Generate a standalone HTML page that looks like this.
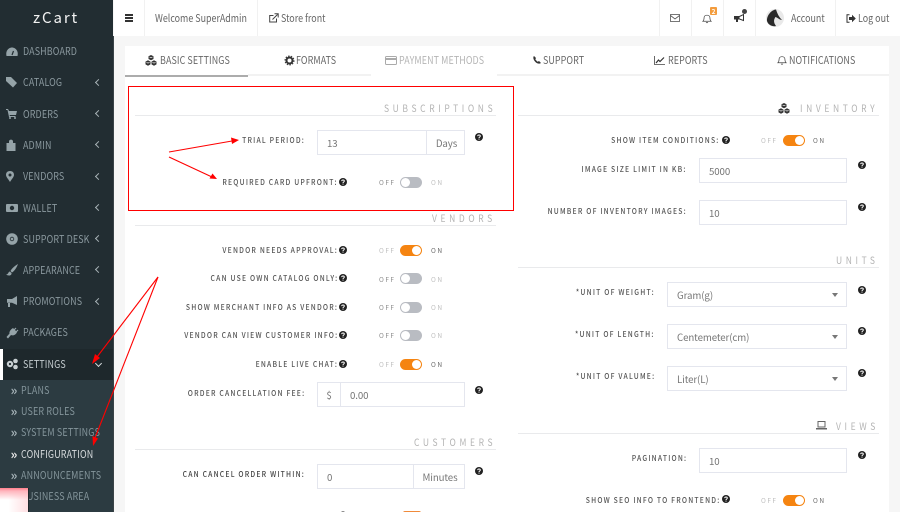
<!DOCTYPE html>
<html><head><meta charset="utf-8"><title>zCart</title>
<style>
html,body{margin:0;padding:0;width:900px;height:512px;overflow:hidden;background:#f6f6f6}
body{font-family:"Noto Sans CJK SC","Liberation Sans",sans-serif;position:relative}
.a,.t,.l,.h,.i,.off,.on,.sw,.lab{position:absolute}
.t{white-space:nowrap;line-height:14px;transform:scaleX(.85);transform-origin:0 50%}
.s{left:23px;font-size:10.5px;color:#8b999f;letter-spacing:.15px}
.c{left:95.500px;width:4px;height:4px;border-left:1.5px solid #a9b4b8;border-bottom:1.5px solid #a9b4b8;transform:rotate(45deg);position:absolute}
.sub{left:21px;font-size:10.5px;color:#84959b;letter-spacing:.2px}
.dbl{position:absolute;left:10.500px;color:#a3b0b5;font-size:13px;line-height:14px;font-weight:700}
.top{font-size:10.5px;color:#666}
.tab{font-size:10.5px;color:#666;letter-spacing:.1px}
.sec{font-size:10px;letter-spacing:4.25px;color:#b4b4b4}
.lab{white-space:nowrap;line-height:14px;font-size:8px;letter-spacing:1.42px;font-weight:500;color:#555;text-align:right;transform:scaleX(.85);transform-origin:100% 50%}
.line{position:absolute;height:1px;background:#e9eaec}
.box{position:absolute;box-sizing:border-box;border:1px solid #e4e6ee;background:#fff;font-size:9.7px;letter-spacing:-.1px;color:#777;line-height:24px;padding-left:9px;height:25px}
.add{position:absolute;top:0;bottom:0;border-left:1px solid #e4e6ee;text-align:center;color:#777}
.sw{width:22px;height:11px;border-radius:6px;background:#b9bcc2}
.sw:after{content:"";position:absolute;left:1px;top:1px;width:9px;height:9px;border-radius:50%;background:#fff}
.sw.y{background:#f58411}.sw.y:after{left:12px}
.off,.on{font-size:6.5px;letter-spacing:1.5px;line-height:10px;color:#bdbdbd;white-space:nowrap}
.dk{color:#666}
.caret{position:absolute;right:8px;top:10px;border-left:3px solid transparent;border-right:3px solid transparent;border-top:4px solid #777}
svg{position:absolute;overflow:visible}
</style></head><body>
<svg width="0" height="0" style="position:absolute"><defs>
<symbol id="q" viewBox="0 0 8 8"><circle cx="4" cy="4" r="4" fill="#222"/><path d="M2.700 3.100C2.800 1.700 5.300 1.700 5.300 3.100 5.300 4 4 4 4 5" fill="none" stroke="#fff" stroke-width="1"/><rect x="3.500" y="5.600" width="1" height="1" fill="#fff"/></symbol>
<symbol id="cubes" viewBox="0 0 12 11"><path d="M6 0 8.500 1.300V4L6 5.200 3.500 4V1.300ZM3 5.300 5.500 6.600V9.400L3 10.700 .5 9.400V6.600ZM9 5.300 11.500 6.600V9.400L9 10.700 6.500 9.400V6.600Z" fill="#333"/><path d="M4.500 2 6 2.800 7.500 2M1.500 7.300 3 8.100 4.500 7.300M7.500 7.300 9 8.100 10.500 7.300" fill="none" stroke="#fff" stroke-width=".6"/></symbol>
<symbol id="bell" viewBox="0 0 11 11"><path d="M1 8.500C2.400 7.400 2.200 6 2.300 4.400 2.400 1 8.600 1 8.700 4.400 8.800 6 8.600 7.400 10 8.500ZM4.500 9.500C5 10.400 6 10.400 6.500 9.500" fill="none" stroke="#444" stroke-width=".8"/></symbol>
</defs></svg>

<!-- sidebar -->
<div class="a" style="left:0;top:0;width:113px;height:512px;background:#222d32"></div>
<div class="a" style="left:113px;top:36px;width:1px;height:476px;background:#3a4347"></div>
<div class="t" style="left:33px;top:9px;font-size:15px;line-height:18px;color:#f2f2f2;letter-spacing:1.9px;transform:none">zCart</div>

<svg style="left:6px;top:47px" width="12" height="10"><path d="M.5 9C-.8 3.500 3 .5 6 .5S12.800 3.500 11.500 9Z" fill="#95a3a8"/><path d="M6 8 7.500 4" stroke="#222d32" stroke-width="1.200"/></svg>
<div class="t s" style="top:45px">DASHBOARD</div>
<svg style="left:6px;top:77px" width="12" height="11"><path d="M0 0H5L11 6 7 10.500 0 4Z" fill="#95a3a8"/></svg>
<div class="t s" style="top:76px">CATALOG</div><div class="c" style="top:80px"></div>
<svg style="left:6px;top:109px" width="11" height="10"><path d="M0 0H2L3 2H11L10 6H3.500L4 7H9.500V8H3L1.500 1H0Z" fill="#95a3a8"/><circle cx="4" cy="9" r="1" fill="#95a3a8"/><circle cx="9" cy="9" r="1" fill="#95a3a8"/></svg>
<div class="t s" style="top:108px">ORDERS</div><div class="c" style="top:111px"></div>
<svg style="left:6px;top:139px" width="10" height="12"><path d="M3 4V2.500C3 0 7 0 7 2.500V4H9.500V12H.5V4Z" fill="#95a3a8"/></svg>
<div class="t s" style="top:139px">ADMIN</div><div class="c" style="top:142px"></div>
<svg style="left:6px;top:171px" width="8" height="11"><path d="M4 0C7 0 8 2 8 4 8 6 5 9 4 11 3 9 0 6 0 4 0 2 1 0 4 0Z" fill="#95a3a8"/><circle cx="4" cy="4" r="1.500" fill="#222d32"/></svg>
<div class="t s" style="top:170px">VENDORS</div><div class="c" style="top:174px"></div>
<svg style="left:6px;top:204px" width="12" height="8"><rect width="12" height="8" rx="1" fill="#95a3a8"/><circle cx="6" cy="4" r="2.200" fill="#222d32"/></svg>
<div class="t s" style="top:202px">WALLET</div><div class="c" style="top:205px"></div>
<svg style="left:6px;top:233px" width="12" height="12"><circle cx="6" cy="6" r="5.800" fill="#95a3a8"/><circle cx="6" cy="6" r="2.200" fill="#222d32"/><circle cx="6" cy="6" r="1.400" fill="#95a3a8"/></svg>
<div class="t s" style="top:233px">SUPPORT DESK</div><div class="c" style="top:236px"></div>
<svg style="left:6px;top:264px" width="12" height="12"><path d="M12 0C10 1 6 4 4.500 7L6 8.500C8.500 7 11 3 12 0ZM3.800 7.500C2 8 2.500 10.500 0 10.500 2 12 6 12 5.500 9Z" fill="#95a3a8"/></svg>
<div class="t s" style="top:264px">APPEARANCE</div><div class="c" style="top:267px"></div>
<svg style="left:6px;top:296px" width="11" height="11"><path d="M11 0V9L6 6.800H1V3H6Z" fill="#95a3a8"/><rect x="2" y="7" width="2" height="4" fill="#95a3a8"/></svg>
<div class="t s" style="top:295px">PROMOTIONS</div><div class="c" style="top:299px"></div>
<svg style="left:6px;top:327px" width="12" height="12"><path d="M7 1 11 5C10 8 7 9 5 8L2 11.500 .5 10 3.500 6.500C3 5 4.500 2.500 7 1Z" fill="#95a3a8"/><path d="M8 3 10 1M10 5 12 3" stroke="#95a3a8" stroke-width="1.200"/></svg>
<div class="t s" style="top:326px">PACKAGES</div>

<div class="a" style="left:0;top:349px;width:113px;height:31px;background:#1e282c"></div>
<div class="a" style="left:0;top:349px;width:3px;height:31px;background:#fff"></div>
<svg style="left:6px;top:358px" width="12" height="12"><circle cx="4" cy="6" r="3.200" fill="#c9d0d3"/><circle cx="4" cy="6" r="1.100" fill="#1e282c"/><circle cx="9.500" cy="3" r="2.300" fill="#c9d0d3"/><circle cx="9.500" cy="9" r="2.300" fill="#c9d0d3"/></svg>
<div class="t s" style="top:358px;color:#c6ced1">SETTINGS</div>
<div class="c" style="left:96px;top:361px;transform:rotate(-45deg);border-color:#d5dadc"></div>

<div class="a" style="left:0;top:380px;width:113px;height:132px;background:#2c3b41"></div>
<span class="dbl" style="top:383px">»</span><div class="t sub" style="top:384px">PLANS</div>
<span class="dbl" style="top:404px">»</span><div class="t sub" style="top:405px">USER ROLES</div>
<span class="dbl" style="top:425px">»</span><div class="t sub" style="top:426px">SYSTEM SETTINGS</div>
<span class="dbl" style="top:447px;color:#e6e6e6">»</span><div class="t sub" style="top:448px;color:#d8dcde">CONFIGURATION</div>
<span class="dbl" style="top:468px">»</span><div class="t sub" style="top:469px">ANNOUNCEMENTS</div>
<div class="t sub" style="top:490px">BUSINESS AREA</div>
<div class="a" style="left:0;top:488px;width:29px;height:24px;box-sizing:border-box;border-right:1px solid #1e282c;background:linear-gradient(to bottom,#ff7f8c 0,#ffb5bd 3px,rgba(255,255,255,0) 12px),linear-gradient(to left,#ffdfe2,#fff 70%)"></div>

<!-- topbar -->
<div class="a" style="left:114px;top:0;width:786px;height:36px;background:#fff"></div>
<div class="a" style="left:125px;top:14px;width:8px;height:1.500px;background:#333"></div>
<div class="a" style="left:125px;top:17px;width:8px;height:1.500px;background:#333"></div>
<div class="a" style="left:125px;top:20px;width:8px;height:1.500px;background:#333"></div>
<div class="a" style="left:144px;top:0;width:1px;height:36px;background:#f1f1f1"></div>
<div class="a" style="left:257px;top:0;width:1px;height:36px;background:#f1f1f1"></div>
<div class="a" style="left:659px;top:0;width:1px;height:36px;background:#f1f1f1"></div>
<div class="a" style="left:691px;top:0;width:1px;height:36px;background:#f1f1f1"></div>
<div class="a" style="left:723px;top:0;width:1px;height:36px;background:#f1f1f1"></div>
<div class="a" style="left:755px;top:0;width:1px;height:36px;background:#f1f1f1"></div>
<div class="a" style="left:835px;top:0;width:1px;height:36px;background:#f1f1f1"></div>
<div class="t top" style="left:155px;top:12px">Welcome SuperAdmin</div>
<svg style="left:269px;top:13px" width="10" height="10"><path d="M7.500 5.500V9H.7V2.500H4.500" fill="none" stroke="#444"/><path d="M3.500 6.500 8.500 1.500M5.500 .8H9.200V4.500" fill="none" stroke="#444"/></svg>
<div class="t top" style="left:281px;top:12px">Store front</div>
<svg style="left:670px;top:14px" width="10" height="8"><rect x=".5" y=".5" width="9" height="7" fill="none" stroke="#555" stroke-width=".8"/><path d="M.5 1.500 5 5 9.500 1.500" fill="none" stroke="#555" stroke-width=".8"/></svg>
<svg style="left:702px;top:13px" width="10" height="11"><use href="#bell"/></svg>
<div class="a" style="left:710px;top:7px;width:7px;height:8px;background:#f39c3d;border-radius:1px;color:#fff;font-size:6.500px;line-height:8px;text-align:center;font-weight:700">2</div>
<svg style="left:734px;top:14px" width="10" height="8"><path d="M9.500 .5V6.500L5.500 5H.5V2.500H5.500Z" fill="#fff" stroke="#333"/><rect x="2" y="5" width="2" height="3" fill="#333"/><path d="M1 2.500H5.500V5H1Z" fill="#333"/></svg>
<div class="a" style="left:742px;top:8.500px;width:5px;height:5px;border-radius:50%;background:#444"></div>
<div class="a" style="left:766px;top:9px;width:18px;height:18px;border-radius:50%;background:#e9e9e9"></div>
<svg style="left:766px;top:9px" width="18" height="18"><path d="M10 .5C5 1 .5 7 1 12 2 16 7 18 10 17 7 13 8 10 9.500 8 12 9 14 11 16 11 13 8 11.500 5 10 .5Z" fill="#2a2a2a"/></svg>
<div class="t top" style="left:791px;top:12px">Account</div>
<svg style="left:846px;top:14px" width="10" height="9"><path d="M3.500 .8H1V8.200H3.500" fill="none" stroke="#333"/><path d="M3 3H6V.8L9.800 4.500 6 8.200V6H3Z" fill="#333"/></svg>
<div class="t top" style="left:858px;top:12px">Log out</div>

<!-- tabs -->
<div class="a" style="left:125px;top:46px;width:764px;height:466px;background:#fff"></div>
<div class="a" style="left:248px;top:74px;width:123px;height:2px;background:#f2f2f2"></div>
<div class="a" style="left:497px;top:74px;width:392px;height:2px;background:#f2f2f2"></div>
<div class="a" style="left:125px;top:75px;width:123px;height:1.500px;background:#acacac"></div>
<svg style="left:145px;top:55px" width="12" height="11"><use href="#cubes"/></svg>
<div class="t tab" style="left:160px;top:54px">BASIC SETTINGS</div>
<svg style="left:285px;top:56px" width="9" height="9"><circle cx="4.500" cy="4.500" r="3" fill="none" stroke="#333" stroke-width="2"/><circle cx="4.500" cy="4.500" r="4.500" fill="none" stroke="#333" stroke-width="1" stroke-dasharray="1.500 1.300"/></svg>
<div class="t tab" style="left:296px;top:54px">FORMATS</div>
<svg style="left:385px;top:56px" width="12" height="9"><rect x=".5" y=".5" width="11" height="8" rx="1" fill="none" stroke="#aaa"/><rect x="1" y="2" width="10" height="2" fill="#aaa"/></svg>
<div class="t tab" style="left:399px;top:54px;color:#b5b5b5">PAYMENT METHODS</div>
<svg style="left:533px;top:56px" width="8" height="8"><path d="M1 0C0 1 0 3 2 5.500S6.500 8 8 7L6 5 4.800 5.800C4 5.300 2.800 4 2.300 3.200L3 2Z" fill="#333"/></svg>
<div class="t tab" style="left:543px;top:54px">SUPPORT</div>
<svg style="left:654px;top:56px" width="11" height="9"><path d="M.5 0V8.500H11" fill="none" stroke="#444" stroke-width=".8"/><path d="M2 7 4.500 4 6 5.500 10 1.500" fill="none" stroke="#333" stroke-width="1.200"/></svg>
<div class="t tab" style="left:668px;top:54px">REPORTS</div>
<svg style="left:777px;top:55px" width="10" height="10"><use href="#bell"/></svg>
<div class="t tab" style="left:789px;top:54px">NOTIFICATIONS</div>

<!-- left column section titles -->
<div class="t sec" style="left:384px;top:101px">SUBSCRIPTIONS</div>
<div class="line" style="left:135px;top:115px;width:361px"></div>
<div class="t sec" style="left:432px;top:211px">VENDORS</div>
<div class="line" style="left:135px;top:225px;width:361px"></div>
<div class="t sec" style="left:414px;top:435px">CUSTOMERS</div>
<div class="line" style="left:135px;top:449px;width:361px"></div>

<!-- subscriptions -->
<div class="lab" style="right:595px;top:134px">TRIAL PERIOD:</div>
<div class="box" style="left:317px;top:130px;width:148px">13<div class="add" style="left:108px;width:39px">Days</div></div>
<svg style="left:475px;top:133px" width="8" height="8"><use href="#q"/></svg>
<div class="lab" style="right:562px;top:176px">REQUIRED CARD UPFRONT:</div>
<svg style="left:339px;top:178px" width="8" height="8"><use href="#q"/></svg>
<div class="off dk" style="left:379px;top:177px;color:#888">OFF</div><div class="sw" style="left:400px;top:177px"></div><div class="on" style="left:431px;top:177px">ON</div>

<!-- vendors -->
<div class="lab" style="right:562px;top:244px">VENDOR NEEDS APPROVAL:</div>
<svg style="left:339px;top:246px" width="8" height="8"><use href="#q"/></svg>
<div class="off" style="left:379px;top:245px">OFF</div><div class="sw y" style="left:400px;top:245px"></div><div class="on dk" style="left:431px;top:245px">ON</div>
<div class="lab" style="right:562px;top:272px">CAN USE OWN CATALOG ONLY:</div>
<svg style="left:339px;top:274px" width="8" height="8"><use href="#q"/></svg>
<div class="off dk" style="left:379px;top:274px;color:#888">OFF</div><div class="sw" style="left:400px;top:273px"></div><div class="on" style="left:431px;top:274px">ON</div>
<div class="lab" style="right:562px;top:301px">SHOW MERCHANT INFO AS VENDOR:</div>
<svg style="left:339px;top:303px" width="8" height="8"><use href="#q"/></svg>
<div class="off dk" style="left:379px;top:302px;color:#888">OFF</div><div class="sw" style="left:400px;top:302px"></div><div class="on" style="left:431px;top:302px">ON</div>
<div class="lab" style="right:562px;top:329px">VENDOR CAN VIEW CUSTOMER INFO:</div>
<svg style="left:339px;top:331px" width="8" height="8"><use href="#q"/></svg>
<div class="off dk" style="left:379px;top:330px;color:#888">OFF</div><div class="sw" style="left:400px;top:330px"></div><div class="on" style="left:431px;top:330px">ON</div>
<div class="lab" style="right:562px;top:358px">ENABLE LIVE CHAT:</div>
<svg style="left:339px;top:360px" width="8" height="8"><use href="#q"/></svg>
<div class="off" style="left:379px;top:359px">OFF</div><div class="sw y" style="left:400px;top:359px"></div><div class="on dk" style="left:431px;top:359px">ON</div>
<div class="lab" style="right:595px;top:387px">ORDER CANCELLATION FEE:</div>
<div class="box" style="left:317px;top:382px;width:148px;padding-left:32px"><div class="add" style="left:0;width:22px;border-left:0;border-right:1px solid #e4e6ee">$</div>0.00</div>
<svg style="left:475px;top:386px" width="8" height="8"><use href="#q"/></svg>

<!-- customers -->
<div class="lab" style="right:595px;top:468px;color:#444">CAN CANCEL ORDER WITHIN:</div>
<div class="box" style="left:317px;top:464px;width:148px">0<div class="add" style="left:95px;width:52px">Minutes</div></div>
<svg style="left:475px;top:467px" width="8" height="8"><use href="#q"/></svg>
<div class="a" style="left:403px;top:510.500px;width:18px;height:2px;background:#f08a3a;border-radius:2px 2px 0 0"></div>
<div class="a" style="left:341px;top:510.500px;width:4px;height:2px;background:#888;border-radius:2px 2px 0 0"></div>

<!-- red annotation -->
<div class="a" style="left:128px;top:86px;width:386px;height:125px;box-sizing:border-box;border:1.300px solid #f00"></div>
<svg style="left:0;top:0" width="900" height="512">
<g stroke="#f00" stroke-width="1.100" fill="none"><path d="M169 152 232 141"/><path d="M169 157 212 177"/><path d="M158 277 97 357"/><path d="M158 277 95 438"/></g>
<g fill="#f00"><path d="M239 140 231 137.500 232 144Z"/><path d="M217 179 212.500 173.500 209.500 178.500Z"/><path d="M92 364 95 354 100 358Z"/><path d="M93 446 92.500 436 98 438.500Z"/></g>
</svg>

<!-- right column -->
<svg style="left:778px;top:103px" width="12" height="11"><use href="#cubes"/></svg>
<div class="t sec" style="left:800px;top:101px">INVENTORY</div>
<div class="line" style="left:518px;top:115px;width:361px"></div>
<div class="lab" style="right:180px;top:134px">SHOW ITEM CONDITIONS:</div>
<svg style="left:722px;top:136px" width="8" height="8"><use href="#q"/></svg>
<div class="off" style="left:761px;top:135px">OFF</div><div class="sw y" style="left:783px;top:135px"></div><div class="on dk" style="left:813px;top:135px">ON</div>
<div class="lab" style="right:213px;top:163px">IMAGE SIZE LIMIT IN KB:</div>
<div class="box" style="left:699px;top:158px;width:148px">5000</div>
<svg style="left:858px;top:161px" width="8" height="8"><use href="#q"/></svg>
<div class="lab" style="right:213px;top:205px">NUMBER OF INVENTORY IMAGES:</div>
<div class="box" style="left:699px;top:200px;width:148px">10</div>
<svg style="left:858px;top:203px" width="8" height="8"><use href="#q"/></svg>

<div class="t sec" style="left:836px;top:253px">UNITS</div>
<div class="line" style="left:518px;top:267px;width:361px"></div>
<div class="lab" style="right:245px;top:286px">*UNIT OF WEIGHT:</div>
<div class="box" style="left:667px;top:282px;width:180px">Gram(g)<span class="caret"></span></div>
<svg style="left:858px;top:286px" width="8" height="8"><use href="#q"/></svg>
<div class="lab" style="right:245px;top:328px">*UNIT OF LENGTH:</div>
<div class="box" style="left:667px;top:324px;width:180px">Centemeter(cm)<span class="caret"></span></div>
<svg style="left:858px;top:327px" width="8" height="8"><use href="#q"/></svg>
<div class="lab" style="right:245px;top:370px">*UNIT OF VALUME:</div>
<div class="box" style="left:667px;top:366px;width:180px">Liter(L)<span class="caret"></span></div>
<svg style="left:858px;top:369px" width="8" height="8"><use href="#q"/></svg>

<svg style="left:816px;top:421px" width="11" height="9"><rect x="2" y=".5" width="7" height="5.500" fill="none" stroke="#666"/><rect x="0" y="7" width="11" height="1.500" fill="#666"/></svg>
<div class="t sec" style="left:836px;top:419px">VIEWS</div>
<div class="line" style="left:518px;top:433px;width:361px"></div>
<div class="lab" style="right:213px;top:452px">PAGINATION:</div>
<div class="box" style="left:699px;top:448px;width:148px">10</div>
<svg style="left:858px;top:451px" width="8" height="8"><use href="#q"/></svg>
<div class="lab" style="right:180px;top:494px">SHOW SEO INFO TO FRONTEND:</div>
<svg style="left:722px;top:495px" width="8" height="8"><use href="#q"/></svg>
<div class="off" style="left:761px;top:495px">OFF</div><div class="sw y" style="left:783px;top:495px"></div><div class="on dk" style="left:813px;top:495px">ON</div>
</body></html>
